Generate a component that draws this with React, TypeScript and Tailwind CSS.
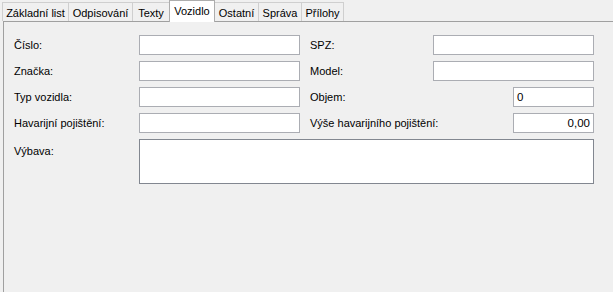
const tabs = [
  { label: "Základní list", w: "w-[67px]" },
  { label: "Odpisování", w: "w-[65px]" },
  { label: "Texty", w: "w-[38px]" },
  { label: "Vozidlo", w: "w-[46px]", active: true },
  { label: "Ostatní", w: "w-[45px]" },
  { label: "Správa", w: "w-[44px]" },
  { label: "Přílohy", w: "w-[43px]" },
];

function Input({ w, value, right }: { w: string; value?: string; right?: boolean }) {
  return (
    <div
      className={`${w} h-[20px] border border-[#abadb3] bg-white px-[3px] text-[11.5px] leading-[18px] text-black ${
        right ? "text-right" : ""
      }`}
    >
      {value}
    </div>
  );
}

export default function App() {
  return (
    <div
      className="relative h-[292px] w-[613px] overflow-hidden bg-[#f0f0f0] text-[11px] text-black"
      style={{ fontFamily: '"Liberation Sans", Arial, sans-serif' }}
    >
      <div className="flex items-end pl-[2px] pt-0">
        {tabs.map((t) =>
          t.active ? (
            <div
              key={t.label}
              className={`${t.w} relative z-10 -mb-px -ml-px h-[22px] border border-b-0 border-[#adadad] bg-white pt-[2px] text-center leading-[16px]`}
            >
              {t.label}
            </div>
          ) : (
            <div
              key={t.label}
              className={`${t.w} -ml-px h-[19px] border border-b-0 border-[#cfcfcf] bg-[#f0f0f0] pt-[2px] text-center leading-[16px] first:ml-0`}
            >
              {t.label}
            </div>
          )
        )}
      </div>
      <div className="ml-[3px] h-[280px] border-l border-t border-[#a0a0a0] pl-[10px] pt-[13px]">
        <div className="flex flex-col gap-[6px]">
          <div className="flex items-center">
            <div className="w-[125px] pt-[1px]">Číslo:</div>
            <Input w="w-[161px]" />
            <div className="ml-[10px] w-[123px] pt-[1px]">SPZ:</div>
            <Input w="w-[161px]" />
          </div>
          <div className="flex items-center">
            <div className="w-[125px] pt-[1px]">Značka:</div>
            <Input w="w-[161px]" />
            <div className="ml-[10px] w-[123px] pt-[1px]">Model:</div>
            <Input w="w-[161px]" />
          </div>
          <div className="flex items-center">
            <div className="w-[125px] pt-[1px]">Typ vozidla:</div>
            <Input w="w-[161px]" />
            <div className="ml-[10px] w-[203px] pt-[1px]">Objem:</div>
            <Input w="w-[81px]" value="0" />
          </div>
          <div className="flex items-center">
            <div className="w-[125px] pt-[1px]">Havarijní pojištění:</div>
            <Input w="w-[161px]" />
            <div className="ml-[10px] w-[203px] pt-[1px]">Výše havarijního pojištění:</div>
            <Input w="w-[81px]" value="0,00" right />
          </div>
          <div className="flex items-start">
            <div className="w-[125px] pt-[4px]">Výbava:</div>
            <div className="h-[45px] w-[455px] border border-[#828790] bg-white" />
          </div>
        </div>
      </div>
    </div>
  );
}
